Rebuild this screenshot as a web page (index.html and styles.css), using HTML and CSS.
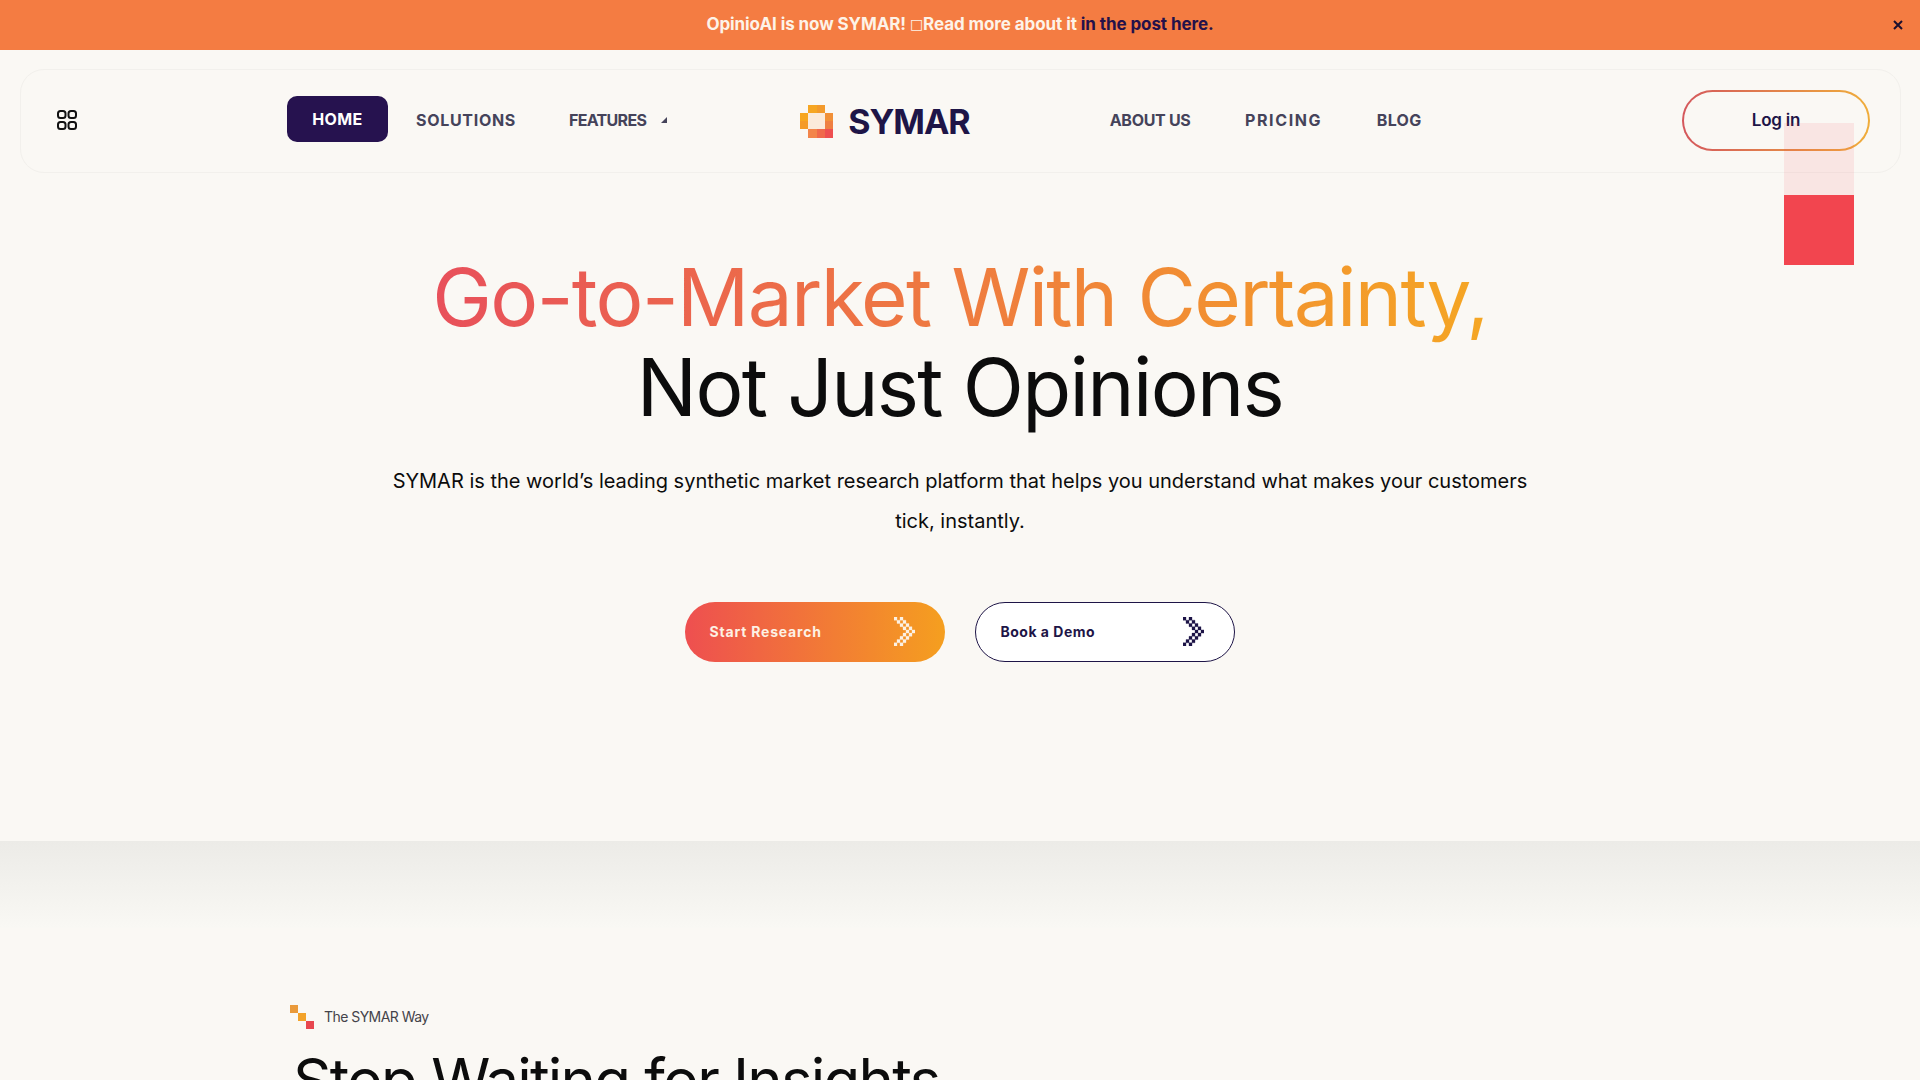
FILE: index.html
```html
<!DOCTYPE html>
<html lang="en">
<head>
  <meta charset="UTF-8">
  <title>SYMAR</title>
  <link rel="stylesheet" href="styles.css">
</head>
<body>
  <svg class="defs" width="0" height="0" aria-hidden="true">
    <symbol id="pixelChevron" viewBox="0 0 21 27" preserveAspectRatio="none">
      <path fill="currentColor" stroke="currentColor" stroke-width="0.3" d="M0 0h3v3H0zM6 0h3v3H6zM3 3h3v3H3zM9 3h3v3H9zM6 6h3v3H6zM12 6h3v3h-3zM9 9h3v3H9zM15 9h3v3h-3zM12 12h3v3h-3zM18 12h3v3h-3zM9 15h3v3H9zM15 15h3v3h-3zM6 18h3v3H6zM12 18h3v3h-3zM3 21h3v3H3zM9 21h3v3H9zM0 24h3v3H0zM6 24h3v3H6z"/>
    </symbol>
  </svg>

  <div class="banner">
    <p>OpinioAI is now SYMAR! <span class="tofu">□</span>Read more about it <a href="#">in the post here.</a></p>
    <button class="banner-close" aria-label="Close">
      <svg width="10" height="10" viewBox="0 0 10 10"><path d="M1 1l8 8M9 1l-8 8" stroke="#1b0f2e" stroke-width="2"/></svg>
    </button>
  </div>

  <header class="nav">
    <button class="menu-btn" aria-label="Menu">
      <svg width="20" height="20" viewBox="0 0 20 20" fill="none" stroke="#111" stroke-width="2">
        <rect x="1" y="1" width="7.5" height="7" rx="2.5"/>
        <rect x="11.5" y="1" width="7.5" height="7" rx="2.5"/>
        <rect x="1" y="12" width="7.5" height="7" rx="2.5"/>
        <rect x="11.5" y="12" width="7.5" height="7" rx="2.5"/>
      </svg>
    </button>

    <nav class="nav-left">
      <a class="nav-link active" href="#">HOME</a>
      <a class="nav-link solutions" href="#">SOLUTIONS</a>
      <a class="nav-link features" href="#">FEATURES <span class="caret"></span></a>
    </nav>

    <a class="logo" href="#">
      <svg width="33" height="34" viewBox="0 0 4 4" shape-rendering="crispEdges">
        <rect x="1" y="1" width="2" height="2" fill="#fbeadb"/>
        <rect x="1" y="0" width="1" height="1" fill="#f6a623"/>
        <rect x="2" y="0" width="1" height="1" fill="#f39a2c"/>
        <rect x="0" y="1" width="1" height="1" fill="#f7a61f"/>
        <rect x="0" y="2" width="1" height="1" fill="#f59a28"/>
        <rect x="3" y="1" width="1" height="1" fill="#f19038"/>
        <rect x="3" y="2" width="1" height="1" fill="#ef7f42"/>
        <rect x="1" y="3" width="1" height="1" fill="#f3854a"/>
        <rect x="2" y="3" width="1" height="1" fill="#f0694b"/>
        <rect x="3" y="3" width="1" height="1" fill="#ee4f50"/>
      </svg>
      <span>SYMAR</span>
    </a>

    <nav class="nav-right">
      <a class="nav-link about" href="#">ABOUT US</a>
      <a class="nav-link pricing" href="#">PRICING</a>
      <a class="nav-link" href="#">BLOG</a>
    </nav>

    <a class="login" href="#">Log in</a>
  </header>

  <div class="pixel-deco">
    <div class="pixel-light"></div>
    <div class="pixel-red"></div>
  </div>

  <section class="hero">
    <h1><span class="grad">Go-to-Market With Certainty,</span><br>Not Just Opinions</h1>
    <p class="lead">SYMAR is the world’s leading synthetic market research platform that helps you understand what makes your customers tick, instantly.</p>
    <div class="cta-row">
      <a class="cta cta-primary" href="#">
        <span>Start Research</span>
        <svg width="21" height="29"><use href="#pixelChevron"/></svg>
      </a>
      <a class="cta cta-outline" href="#">
        <span>Book a Demo</span>
        <svg width="21" height="29"><use href="#pixelChevron"/></svg>
      </a>
    </div>
  </section>

  <div class="band"></div>

  <section class="way">
    <div class="eyebrow">
      <span class="eyebrow-icon"><i></i><i></i><i></i></span>
      <span class="eyebrow-text">The SYMAR Way</span>
    </div>
    <h2>Stop Waiting for Insights</h2>
  </section>
</body>
</html>
```

FILE: styles.css
```css
html, body {
  height: 1080px;
  overflow: hidden;
}

body {
  margin: 0;
  background: #faf8f4;
  color: #0c0c0c;
  font-family: Inter, 'Liberation Sans', sans-serif;
  position: relative;
}

a {
  text-decoration: none;
  color: inherit;
}

button {
  background: none;
  border: none;
  padding: 0;
  cursor: pointer;
}

.defs {
  position: absolute;
}

.banner {
  height: 50px;
  background: #f47c42;
  display: flex;
  align-items: center;
  justify-content: center;
  position: relative;
}

.banner p {
  margin: 0 0 2px;
  font-size: 17px;
  font-weight: 700;
  letter-spacing: -0.08px;
  color: #fdf3e8;
}

.banner a {
  color: #24114a;
}

.tofu {
  font-family: 'DejaVu Sans', sans-serif;
  font-size: 14px;
  font-weight: 400;
  vertical-align: 1px;
}

.banner-close {
  position: absolute;
  right: 17px;
  top: 20px;
  display: flex;
}

.nav {
  margin: 19px 19px 0 20px;
  height: 104px;
  box-sizing: border-box;
  border: 1px solid #f2f0ec;
  border-radius: 24px;
  padding: 0 0 3px 36px;
  display: flex;
  align-items: center;
}

.menu-btn {
  display: flex;
  width: 20px;
  margin-right: 210px;
}

.nav-left, .nav-right {
  display: flex;
  align-items: center;
}

.nav-link {
  font-size: 16px;
  font-weight: 700;
  color: #45435a;
  letter-spacing: 0.4px;
  white-space: nowrap;
}

.nav-link.solutions {
  letter-spacing: 0.7px;
}

.nav-link.about {
  letter-spacing: -0.3px;
}

.nav-link.pricing {
  letter-spacing: 1.6px;
}

.nav-left .nav-link.active {
  background: #26124f;
  color: #fff;
  width: 101px;
  height: 46px;
  margin-bottom: 2px;
  border-radius: 10px;
  display: flex;
  align-items: center;
  justify-content: center;
  margin-right: 28px;
}

.nav-left .nav-link.features {
  margin-left: 53px;
  display: flex;
  align-items: center;
  gap: 15px;
  letter-spacing: -0.7px;
}

.caret {
  width: 0;
  height: 0;
  border-left: 6px solid transparent;
  border-bottom: 6px solid #45435a;
}

.logo {
  display: flex;
  align-items: center;
  gap: 15px;
  margin-left: 133px;
  margin-top: 3px;
  font-size: 34px;
  font-weight: 700;
  color: #1e1547;
  letter-spacing: -1px;
}

.nav-right {
  gap: 54.5px;
  margin-left: 140px;
}

.login {
  margin-left: auto;
  margin-top: 1px;
  margin-right: 30px;
  width: 188px;
  height: 61px;
  box-sizing: border-box;
  border: 2px solid transparent;
  border-radius: 31px;
  background: linear-gradient(#faf8f4, #faf8f4) padding-box,
    linear-gradient(90deg, #d4575c, #f0ad3a) border-box;
  display: flex;
  align-items: center;
  justify-content: center;
  font-size: 17px;
  font-weight: 600;
  letter-spacing: -0.2px;
  color: #1e1547;
}

/* decorative squares sit over the login button */
.pixel-deco {
  position: absolute;
  left: 1784px;
  top: 123px;
  width: 70px;
}

.pixel-light {
  height: 72px;
  background: rgba(242, 69, 79, 0.1);
}

.pixel-red {
  height: 70px;
  background: #f2454f;
}

.hero {
  display: flex;
  flex-direction: column;
  align-items: center;
  padding-top: 79px;
}

.hero h1 {
  margin: 0;
  font-size: 80px;
  line-height: 90px;
  font-weight: 400;
  text-align: center;
  letter-spacing: -1.65px;
}

.grad {
  background: linear-gradient(90deg, #e8505b, #f5a623);
  -webkit-background-clip: text;
  background-clip: text;
  color: transparent;
}

.lead {
  margin: 29px 0 0;
  width: 1160px;
  font-size: 20px;
  line-height: 40px;
  text-align: center;
}

.cta-row {
  display: flex;
  gap: 30px;
  margin-top: 61px;
  margin-left: -1px;
}

.cta {
  width: 260px;
  height: 60px;
  box-sizing: border-box;
  border-radius: 30px;
  padding: 0 30px 2px 25px;
  display: flex;
  align-items: center;
  justify-content: space-between;
  font-size: 14px;
  font-weight: 700;
  letter-spacing: 0.8px;
}

.cta-primary {
  background: linear-gradient(90deg, #ee4f50, #f59f1f);
  color: #fdf1e4;
}

.cta-outline {
  background: #fff;
  border: 1px solid #1e1547;
  color: #1e1547;
  letter-spacing: 0.5px;
}

.band {
  margin-top: 179px;
  height: 87px;
  background: linear-gradient(#ecebe7, #f9f8f4);
}

.way {
  padding: 77px 0 0 290px;
}

.eyebrow {
  display: flex;
  align-items: center;
  gap: 10px;
  font-size: 14px;
  color: #44434a;
  letter-spacing: -0.55px;
}

.eyebrow-text {
  margin-bottom: 2px;
}

.eyebrow-icon {
  display: flex;
  width: 24px;
  height: 24px;
}

.eyebrow-icon i {
  width: 8px;
  height: 8px;
  background: #ea9a3a;
}

.eyebrow-icon i:nth-child(2) {
  margin-top: 8px;
  background: #f3a32a;
}

.eyebrow-icon i:nth-child(3) {
  margin-top: 16px;
  background: #e8474f;
}

.way h2 {
  margin: 11px 0 0 3px;
  font-size: 60px;
  line-height: 80px;
  font-weight: 400;
  letter-spacing: -1.8px;
  white-space: nowrap;
}
```
